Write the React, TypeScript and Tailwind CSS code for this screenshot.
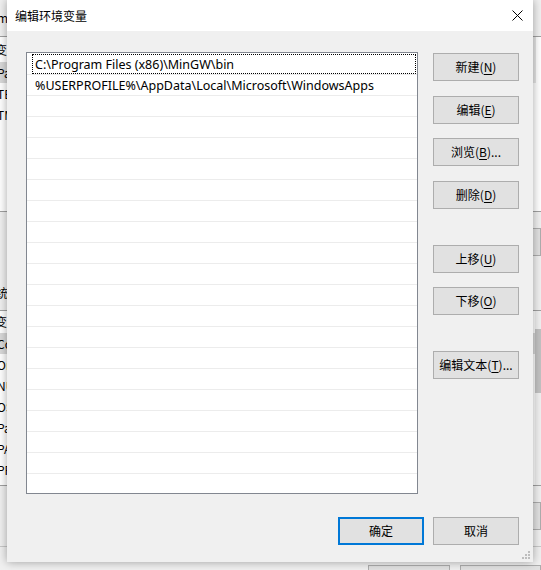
import React from 'react'

const cjk = "font-['Microsoft_YaHei_UI','Noto_Sans_CJK_SC',sans-serif]"
const latin = "font-['Segoe_UI','Noto_Sans','Noto_Sans_CJK_SC',sans-serif]"

const paths = [
    'C:\\Program Files (x86)\\MinGW\\bin',
    '%USERPROFILE%\\AppData\\Local\\Microsoft\\WindowsApps',
]

// button label like 新建(N) with the access key underlined
const Btn = ({ text, k, tail = '', primary = false, className = '' }: { text: string; k: string; tail?: string; primary?: boolean; className?: string }) => (
    <button
        className={`w-[86px] h-[28px] flex items-center justify-center bg-[#e1e1e1] text-[12px] text-black ${cjk} ${primary ? 'border-2 border-[#0078d7]' : 'border border-[#adadad]'} ${className}`}>
        {text}
        {k && (
            <>
                (<span className="underline underline-offset-2">{k}</span>)
            </>
        )}
        {tail}
    </button>
)

const BackRow = ({ t, sel = false }: { t: string; sel?: boolean }) => (
    <div className={`h-[21px] shrink-0 flex items-center -ml-[3px] ${sel ? 'bg-[#d9d9d9]' : ''}`}>{t}</div>
)

const App = () => {
    return (
        <div className={`relative w-[541px] h-[570px] overflow-hidden bg-[#f0f0f0] text-black ${cjk}`}>
            {/*=========== window behind the dialog ===========*/}
            <div className="flex flex-col text-[12px]">
                <div className="h-[36px] shrink-0 flex items-center -ml-[3px]">m</div>
                <div className="h-[176px] shrink-0 border-y border-[#a0a0a0] bg-white flex">
                    <div className="flex-1 flex flex-col">
                        <div className="h-[25px] shrink-0 flex items-center -ml-[5px]">变量</div>
                        <BackRow t="Path" sel />
                        <BackRow t="TEMP" />
                        <BackRow t="TMP" />
                    </div>
                    <div className="w-[3px] h-[46px] bg-[#e6e6e6] mr-[5px]"></div>
                </div>
                <div className="mt-[16px] h-[28px] shrink-0 flex justify-end">
                    <div className="w-[40px] border border-[#adadad] bg-[#e1e1e1]"></div>
                </div>
                <div className="mt-[28px] h-[18px] shrink-0 flex items-center -ml-[16px]">系统变量(S)</div>
                <div className="mt-[8px] h-[176px] shrink-0 border-y border-[#a0a0a0] bg-white flex">
                    <div className="flex-1 flex flex-col">
                        <div className="h-[22px] shrink-0 flex items-center -ml-[5px]">变量</div>
                        <BackRow t="ComSpec" sel />
                        <BackRow t="OneDrive" />
                        <BackRow t="NUMBER" />
                        <BackRow t="OS" />
                        <BackRow t="Path" />
                        <BackRow t="PATHEXT" />
                        <BackRow t="PROCESSOR" />
                    </div>
                    <div className="w-[6px] bg-[#f0f0f0] flex flex-col">
                        <div className="mt-[18px] h-[64px] bg-[#c2c2c2]"></div>
                    </div>
                </div>
                <div className="mt-[16px] h-[28px] shrink-0 flex justify-end">
                    <div className="w-[40px] border border-[#adadad] bg-[#e1e1e1]"></div>
                </div>
                <div className="mt-[16px] shrink-0 border-t border-[#c8c8c8]"></div>
                <div className="mt-[18px] shrink-0 flex gap-[10px] pl-[368px]">
                    <div className="w-[85px] h-[20px] border border-[#adadad] bg-[#e1e1e1]"></div>
                    <div className="w-[85px] h-[20px] border border-[#adadad] bg-[#e1e1e1]"></div>
                </div>
            </div>

            {/*=========== dialog ===========*/}
            <div className="absolute left-[7px] top-0 w-[526px] h-[562px] flex flex-col bg-[#f0f0f0] shadow-[0_0_9px_rgba(0,0,0,0.35)]">
                <div className="h-[31px] bg-white flex items-center pl-[8px] pr-[10px] text-[12px]">
                    <span>编辑环境变量</span>
                    <svg className="ml-auto" width="11" height="11" viewBox="0 0 11 11">
                        <path d="M0.5 0.5 L10.5 10.5 M10.5 0.5 L0.5 10.5" stroke="#000" strokeWidth="1" />
                    </svg>
                </div>

                <div className="flex-1 flex flex-col pt-[21px] pl-[19px] pr-[14px]">
                    <div className="flex">
                        {/* path list */}
                        <div className={`w-[392px] h-[442px] border border-[#828790] bg-white pt-[1px] overflow-hidden text-[12.5px] ${latin}`}>
                            {Array.from({ length: 21 }).map((_, i) => (
                                <div key={i} className="h-[21px] border-b border-[#ececec] pl-[5px] pr-[1px]">
                                    <div className={`h-[20px] flex items-center pl-[2px] pt-[2px] border ${i === 0 ? 'border-dotted border-black' : 'border-transparent'}`}>
                                        {paths[i] ?? ''}
                                    </div>
                                </div>
                            ))}
                        </div>

                        {/* side buttons */}
                        <div className="ml-[15px] flex flex-col">
                            <Btn text="新建" k="N" className="mt-[1px]" />
                            <Btn text="编辑" k="E" className="mt-[15px]" />
                            <Btn text="浏览" k="B" tail="..." className="mt-[14px]" />
                            <Btn text="删除" k="D" className="mt-[15px]" />
                            <Btn text="上移" k="U" className="mt-[36px]" />
                            <Btn text="下移" k="O" className="mt-[14px]" />
                            <Btn text="编辑文本" k="T" tail="..." className="mt-[36px]" />
                        </div>
                    </div>

                    <div className="mt-[23px] flex justify-end gap-[9px]">
                        <Btn text="确定" k="" primary />
                        <Btn text="取消" k="" />
                    </div>
                </div>

                {/* resize grip */}
                <svg className="absolute right-[3px] bottom-[3px]" width="8" height="8" viewBox="0 0 8 8">
                    <rect x="6" y="0" width="2" height="2" fill="#bdbdbd" />
                    <rect x="3" y="3" width="2" height="2" fill="#bdbdbd" />
                    <rect x="6" y="3" width="2" height="2" fill="#bdbdbd" />
                    <rect x="0" y="6" width="2" height="2" fill="#bdbdbd" />
                    <rect x="3" y="6" width="2" height="2" fill="#bdbdbd" />
                    <rect x="6" y="6" width="2" height="2" fill="#bdbdbd" />
                </svg>
            </div>
        </div>
    )
}

export default App
